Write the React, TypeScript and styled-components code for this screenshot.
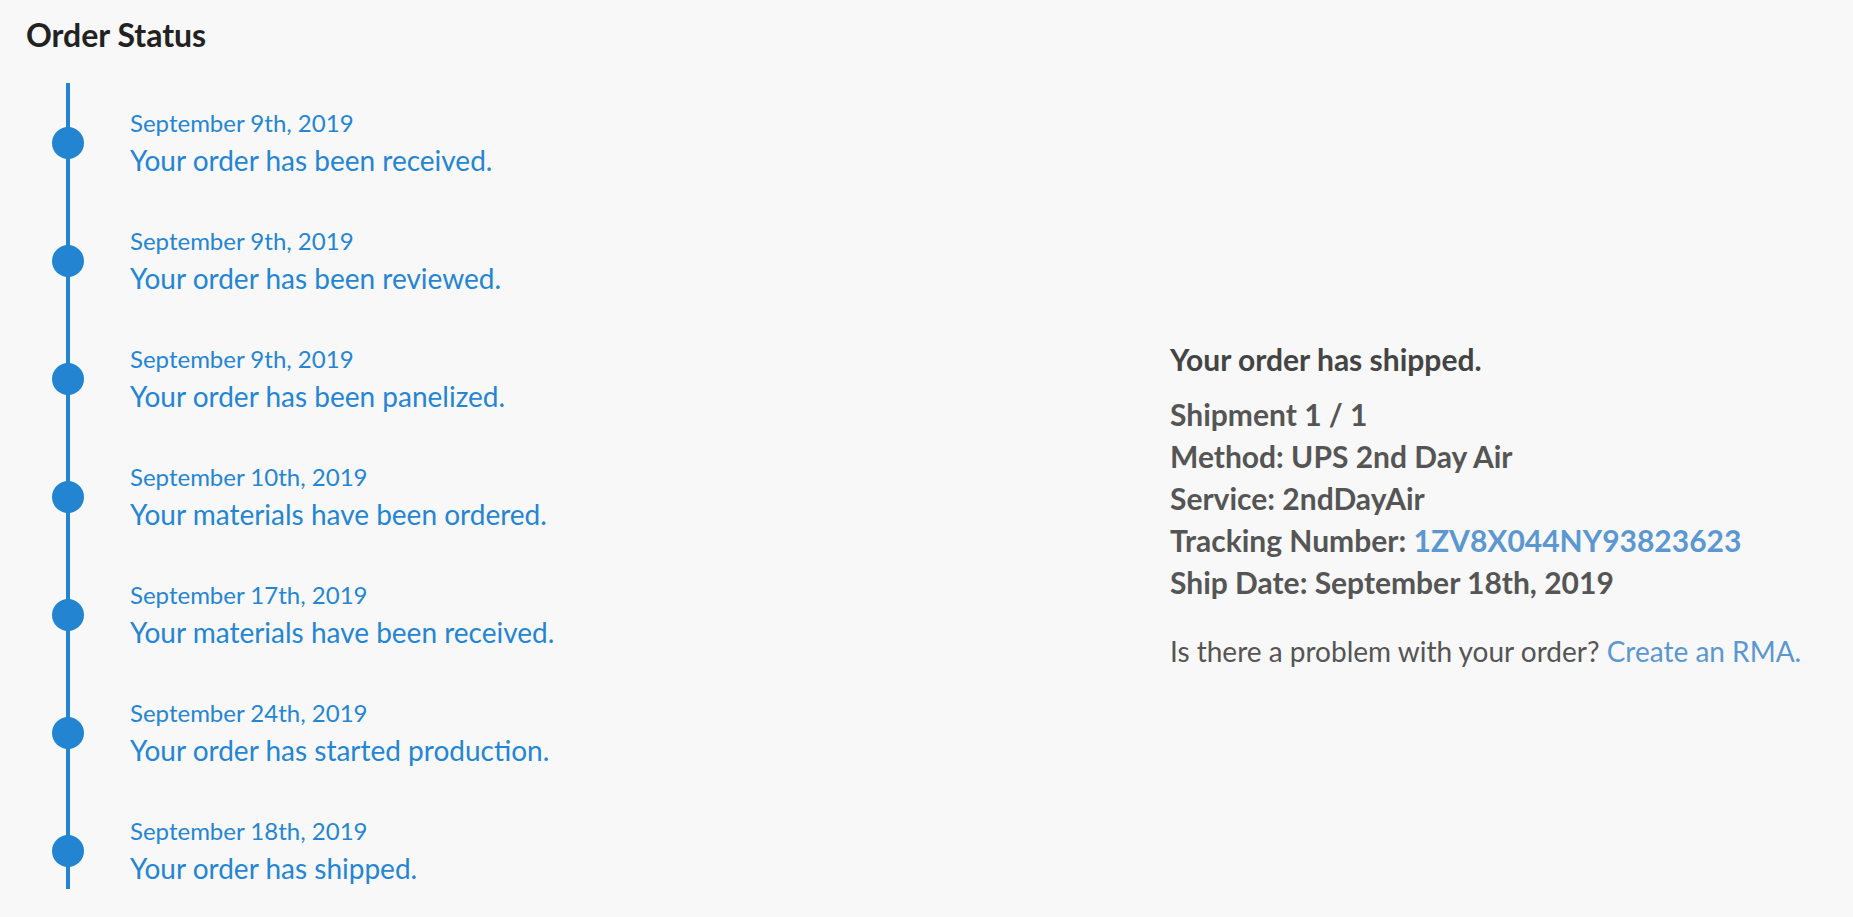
import React from "react";
import styled, { createGlobalStyle } from "styled-components";

const GlobalStyle = createGlobalStyle`
  html, body {
    margin: 0;
    padding: 0;
    background: #f8f8f8;
  }
  body {
    font-family: Lato, "Open Sans", "Noto Sans", sans-serif;
  }
`;

const Page = styled.div`
  padding: 17px 26px 0 26px;
  box-sizing: border-box;
`;

const Title = styled.h2`
  margin: 0;
  font-size: 32px;
  line-height: 36px;
  font-weight: 700;
  color: #222;
`;

const Body = styled.div`
  display: grid;
  grid-template-columns: 1144px 1fr;
  align-items: center;
  margin-top: 30px;
`;

const Timeline = styled.ul`
  list-style: none;
  margin: 0 0 0 40px;
  padding: 22px 0 0 0;
  border-left: 4px solid #2385d2;
  display: flex;
  flex-direction: column;
  gap: 42px;
`;

const Item = styled.li`
  position: relative;
  padding-left: 60px;
`;

const Dot = styled.span`
  position: absolute;
  left: -18px;
  top: 50%;
  width: 32px;
  height: 32px;
  margin-top: -16px;
  border-radius: 50%;
  background: #2385d2;
`;

const DateText = styled.div`
  font-size: 24px;
  line-height: 35px;
  color: #2585d5;
`;

const Desc = styled.div`
  font-size: 28px;
  line-height: 41px;
  color: #2585d5;
`;

const Panel = styled.div`
  padding-top: 37px;
  color: #555;
`;

const PanelHeading = styled.div`
  font-size: 30px;
  line-height: 42px;
  font-weight: 700;
  color: #444;
  margin-bottom: 13px;
`;

const InfoLine = styled.div`
  font-size: 30px;
  line-height: 42px;
  font-weight: 700;
  color: #555;
`;

const Link = styled.a`
  color: #5b97d1;
  text-decoration: none;
`;

const Note = styled.p`
  margin: 27px 0 0 0;
  font-size: 28px;
  line-height: 42px;
  color: #555;
`;

const events = [
  { date: "September 9th, 2019", text: "Your order has been received." },
  { date: "September 9th, 2019", text: "Your order has been reviewed." },
  { date: "September 9th, 2019", text: "Your order has been panelized." },
  { date: "September 10th, 2019", text: "Your materials have been ordered." },
  { date: "September 17th, 2019", text: "Your materials have been received." },
  { date: "September 24th, 2019", text: "Your order has started production." },
  { date: "September 18th, 2019", text: "Your order has shipped." },
];

export default function App() {
  return (
    <>
      <GlobalStyle />
      <Page>
        <Title>Order Status</Title>
        <Body>
          <Timeline>
            {events.map((e, i) => (
              <Item key={i}>
                <Dot />
                <DateText>{e.date}</DateText>
                <Desc>{e.text}</Desc>
              </Item>
            ))}
          </Timeline>
          <Panel>
            <PanelHeading>Your order has shipped.</PanelHeading>
            <InfoLine>Shipment 1 / 1</InfoLine>
            <InfoLine>Method: UPS 2nd Day Air</InfoLine>
            <InfoLine>Service: 2ndDayAir</InfoLine>
            <InfoLine>
              Tracking Number: <Link href="#">1ZV8X044NY93823623</Link>
            </InfoLine>
            <InfoLine>Ship Date: September 18th, 2019</InfoLine>
            <Note>
              Is there a problem with your order? <Link href="#">Create an RMA.</Link>
            </Note>
          </Panel>
        </Body>
      </Page>
    </>
  );
}
